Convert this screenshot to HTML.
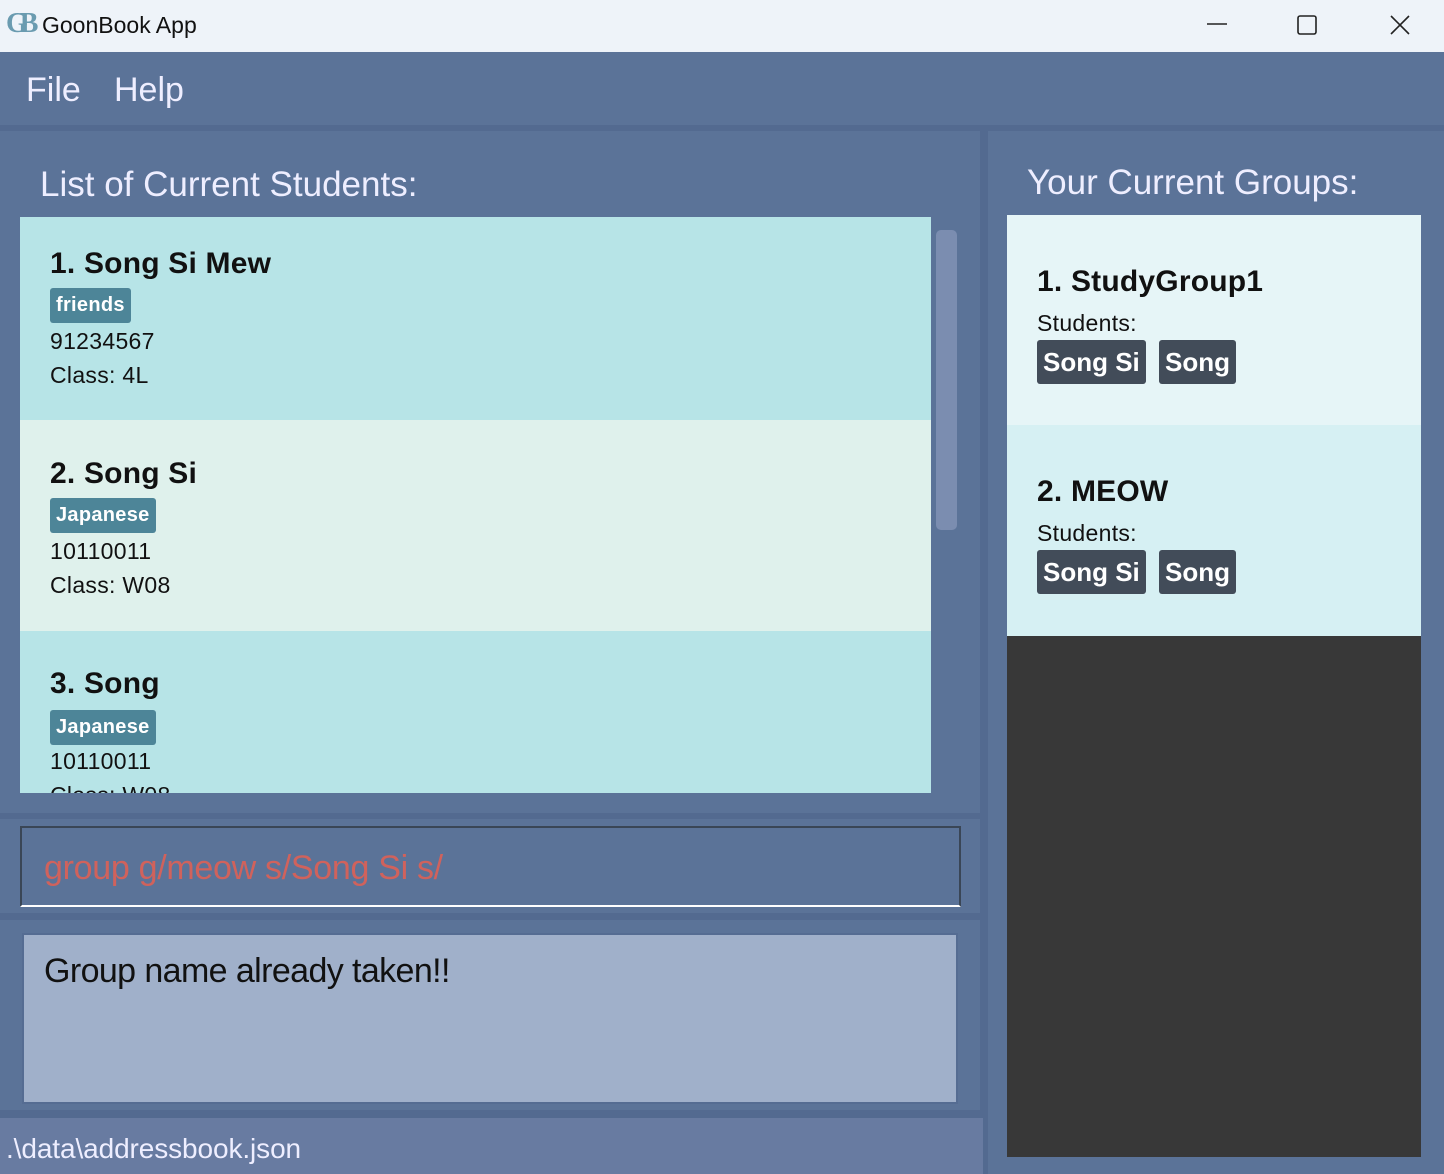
<!DOCTYPE html>
<html><head><meta charset="utf-8"><style>
*{margin:0;padding:0;box-sizing:border-box}
body{width:1444px;height:1174px;position:relative;overflow:hidden;background:#5b7398;font-family:"Liberation Sans",sans-serif}
div{position:absolute}
.t{white-space:nowrap}
.tag{position:absolute;background:#4d8598;color:#fff;font-size:20px;font-weight:bold;padding:3px 6px;border-radius:3px;line-height:29px;letter-spacing:0.3px}
.gt{position:absolute;background:#424c59;color:#fff;font-size:26px;font-weight:bold;padding:0 6px;border-radius:3px;line-height:44px;height:44px}
.h{font-size:30px;color:#111;font-weight:bold;letter-spacing:0.2px}
.d{font-size:23px;color:#111;letter-spacing:0.3px}
</style></head><body>
<div style="left:0;top:0;width:1444px;height:52px;background:#eef3f9"></div>
<div class="t" style="left:6px;top:7px;font-family:'Liberation Serif',serif;font-size:28px;font-weight:bold;color:#6a9bb0;letter-spacing:-8px;line-height:34px">GB</div>
<div class="t" style="left:42px;top:11px;font-size:23px;color:#111;line-height:28px">GoonBook App</div>
<svg style="position:absolute;left:1200px;top:10px" width="220" height="30">
<line x1="7" y1="14" x2="27" y2="14" stroke="#222" stroke-width="1.6"/>
<rect x="98" y="6" width="18" height="18" rx="2" fill="none" stroke="#222" stroke-width="1.6"/>
<path d="M191 6 L209 24 M209 6 L191 24" stroke="#222" stroke-width="1.6"/>
</svg>
<div style="left:0;top:52px;width:1444px;height:73px;background:#5b7398"></div>
<div class="t" style="left:26px;top:70px;font-size:34px;color:#eef;line-height:40px">File</div>
<div class="t" style="left:114px;top:70px;font-size:34px;color:#eef;line-height:40px">Help</div>
<div style="left:0;top:125px;width:1444px;height:6px;background:#536a90"></div>
<div style="left:980px;top:131px;width:8px;height:1043px;background:#536a90"></div>
<div style="left:0;top:813px;width:980px;height:6px;background:#536a90"></div>
<div style="left:0;top:913px;width:980px;height:7px;background:#536a90"></div>
<div style="left:0;top:1110px;width:983px;height:8px;background:#536a90"></div>

<div class="t" style="left:40px;top:164px;font-size:35px;color:#eef;line-height:42px">List of Current Students:</div>
<div style="left:20px;top:217px;width:911px;height:203px;background:#b7e4e7"></div>
<div style="left:20px;top:420px;width:911px;height:211px;background:#dff1ec"></div>
<div style="left:20px;top:631px;width:911px;height:162px;background:#b7e4e7;overflow:hidden">
 <div class="h t" style="left:30px;top:36px">3. Song</div>
 <div class="tag" style="left:30px;top:79px">Japanese</div>
 <div class="d t" style="left:30px;top:117px">10110011</div>
 <div class="d t" style="left:30px;top:151px">Class: W08</div>
</div>
<div class="h t" style="left:50px;top:247px">1. Song Si Mew</div>
<div class="tag" style="left:50px;top:288px">friends</div>
<div class="d t" style="left:50px;top:328px">91234567</div>
<div class="d t" style="left:50px;top:362px">Class: 4L</div>
<div class="h t" style="left:50px;top:457px">2. Song Si</div>
<div class="tag" style="left:50px;top:498px">Japanese</div>
<div class="d t" style="left:50px;top:538px">10110011</div>
<div class="d t" style="left:50px;top:572px">Class: W08</div>
<div style="left:936px;top:230px;width:21px;height:300px;background:#7b8db0;border-radius:5px"></div>

<div style="left:20px;top:826px;width:941px;height:81px;border:2px solid #3a4656;border-bottom:2px solid #fff;background:#5b7398"></div>
<div class="t" style="left:44px;top:848px;font-size:34px;color:#d0625c;line-height:40px;letter-spacing:-0.3px">group g/meow s/Song Si s/</div>
<div style="left:22px;top:933px;width:936px;height:171px;background:#a0b0ca;border:2px solid #556c92"></div>
<div class="t" style="left:44px;top:951px;font-size:34px;color:#111;line-height:40px;letter-spacing:-0.6px">Group name already taken!!</div>
<div style="left:0;top:1118px;width:983px;height:56px;background:#687ba1"></div>
<div class="t" style="left:6px;top:1133px;font-size:28px;color:#eef;line-height:32px;letter-spacing:-0.1px">.\data\addressbook.json</div>

<div class="t" style="left:1027px;top:162px;font-size:35px;color:#eef;line-height:42px">Your Current Groups:</div>
<div style="left:1007px;top:215px;width:414px;height:942px;background:#383838"></div>
<div style="left:1007px;top:215px;width:414px;height:210px;background:#e6f5f7"></div>
<div style="left:1007px;top:425px;width:414px;height:211px;background:#d6f0f3"></div>
<div class="h t" style="left:1037px;top:265px">1. StudyGroup1</div>
<div class="d t" style="left:1037px;top:310px">Students:</div>
<div class="gt" style="left:1037px;top:340px">Song Si</div>
<div class="gt" style="left:1159px;top:340px">Song</div>
<div class="h t" style="left:1037px;top:475px">2. MEOW</div>
<div class="d t" style="left:1037px;top:520px">Students:</div>
<div class="gt" style="left:1037px;top:550px">Song Si</div>
<div class="gt" style="left:1159px;top:550px">Song</div>
</body></html>
